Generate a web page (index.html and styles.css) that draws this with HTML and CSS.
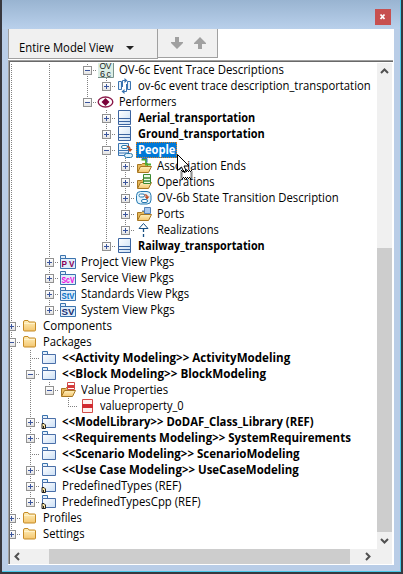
FILE: index.html
```html
<!DOCTYPE html>
<html lang="en">
<head>
<meta charset="utf-8">
<title>Entire Model View</title>
<link rel="stylesheet" href="styles.css">
</head>
<body>
<div class="window">
  <header class="titlebar"><button class="close" aria-label="Close"><svg width="16" height="16" viewBox="0 0 16 16"><path d="M5.500 5.500l4 4.500M9.500 5.500l-4 4.500" stroke="#fff" stroke-width="1.800"/></svg></button></header>
  <main class="client">
    <div class="toolbar">
      <div class="view-select"><span class="label" data-width="95">Entire Model View</span><i class="caret"></i></div>
      <div class="nav">
        <svg width="12" height="12" viewBox="0 0 12 12"><path d="M4 0h4v5h4v1L6 12 0 6V5h4z"/></svg>
        <svg width="12" height="12" viewBox="0 0 12 12"><path d="M4 12h4V7h4V6L6 0 0 6v1h4z"/></svg>
      </div>
    </div>
    <div class="pane">
      <div class="tree" id="tree"></div>
      <div class="vscroll">
        <svg width="15" height="16" viewBox="0 0 15 16"><path d="M4 10l3.500-3.500L11 10"/></svg>
        <div class="vthumb"></div>
        <svg width="15" height="17" viewBox="0 0 15 17"><path d="M4 7l3.500 3.500L11 7"/></svg>
      </div>
      <div class="hscroll">
        <svg width="39" height="15" viewBox="0 0 39 15"><path d="M9 4L5.500 7.500 9 11"/></svg>
        <div class="hthumb"></div>
        <svg width="42" height="15" viewBox="0 0 42 15"><path d="M16 4l3.500 3.500L16 11"/></svg>
      </div>
    </div>
  </main>
  <svg class="cursor" width="17" height="27" viewBox="0 0 17 27"><path d="M.5 .5v16l4-3.500 2.500 5.500 2.500-1-2.500-5.500h5z" fill="#fff" stroke="#000"/><path d="M4 16.500h11v8H4z" fill="none" stroke="#000" stroke-dasharray="1 1"/><path d="M5 17.500h9v6H5z" fill="none" stroke="#000" stroke-dasharray="1 1"/></svg>
</div>
<script src="tree.js"></script>
</body>
</html>
```
FILE: styles.css
```css
* { box-sizing: border-box; }
body { margin: 0; overflow: hidden; font: 12px/16px "Open Sans", "Noto Sans", sans-serif; color: #000; }
svg { display: block; flex: none; }
.window { position: relative; width: 403px; height: 574px; padding: 0 6px 6px; border: solid #38383e; border-width: 0 2px 2px; background: #b9cde7; box-shadow: inset -1px -1px #48c8e8; display: flex; flex-direction: column; }
.titlebar { height: 29px; margin: 0 -5px 0 -6px; padding: 9px 9px 0 0; display: flex; justify-content: flex-end; align-items: flex-start; background: linear-gradient(#99b4d1, #b9d0eb); }
.close { width: 16px; height: 16px; padding: 0; border: 0; background: #c75050; }
.client { width: 386px; height: 536px; background: #fff; }
.toolbar { height: 31px; display: flex; align-items: flex-start; }
.view-select { width: 150px; height: 30px; padding: 11px 0 0 10px; background: #f0f0f0; border: solid #a0a0a0; border-width: 0 1px 1px; display: flex; }
.view-select .label { flex: 0 0 auto; }
.caret { margin: 6px 0 0 12px; width: 8px; height: 4px; background: #222; clip-path: polygon(0 0, 100% 0, 50% 100%); }
.nav { width: 60px; height: 29px; background: #f0f0f0; border: solid #a0a0a0; border-width: 0 1px 1px 0; display: flex; padding: 8px 0 0 13px; gap: 11px; fill: #a0a0a0; }
.pane { width: 385px; height: 504px; border: solid #a0a0a0; border-width: 1px 0 0 1px; box-shadow: inset 1px 1px #696969; padding: 2px 0 0 1px; display: grid; grid-template: 486px 15px / 367px 15px; }
.tree { overflow: hidden; height: 486px; }
.row { display: flex; height: 16px; margin-left: -8px; white-space: nowrap; }
.row:first-child { margin-top: -1px; }
.cell { flex: none; width: 19px; height: 16px; padding: 4px 0 0 5px; background-repeat: no-repeat; --v: repeating-linear-gradient(#808080 0 1px, transparent 1px 2px); --h: repeating-linear-gradient(90deg, #808080 0 1px, transparent 1px 2px); }
.cell.line { background-image: var(--v); background-size: 1px 16px; background-position: 9px 0; }
.cell.mid, .cell.end { background-image: var(--v), var(--h); background-position: 9px 0, 9px 8px; background-size: 1px 16px, 10px 1px; }
.cell.end { background-size: 1px 9px, 10px 1px; }
.toggle { display: block; width: 9px; height: 9px; border: 1px solid #919191; background: linear-gradient(#3b559c, #3b559c) 1px 3px / 5px 1px no-repeat, linear-gradient(#fff, #e4e4e4); }
.toggle.plus { background: linear-gradient(#3b559c, #3b559c) 1px 3px / 5px 1px no-repeat, linear-gradient(#3b559c, #3b559c) 3px 1px / 1px 5px no-repeat, linear-gradient(#fff, #e4e4e4); }
.icon { flex: none; width: 22px; padding-left: 1px; }
.icon.inset { padding-left: 2px; }
.icon svg { overflow: visible; }
.icon text { font-family: "Liberation Sans", sans-serif; font-weight: bold; }
.icon .thin { font-weight: 400; }
.label { display: block; height: 16px; }
.label span { display: inline-block; transform-origin: 0 50%; white-space: nowrap; }
.bold { font-weight: 700; }
.selected { background: #0078d7; color: #fff; outline: 1px dotted #d88020; outline-offset: -1px; margin-left: -2px; padding: 0 2px; box-sizing: content-box; }
.vscroll { background: #f0f0f0; display: flex; flex-direction: column; }
.vthumb { margin-top: 169px; height: 284px; background: #cdcdcd; }
.hscroll { grid-column: 1 / 3; background: #f0f0f0; display: flex; }
.hthumb { width: 301px; background: #cdcdcd; }
.vscroll path, .hscroll path { fill: none; stroke: #505050; stroke-width: 2; }
.cursor { position: absolute; left: 175px; top: 154px; }
.defs { position: absolute; }
```
FILE: tree.js
```js
const pkg = `<path d="M1.500 4.500v-3h5v3" fill="#e7f1fb" stroke="#3b73ae"/><path d="M1.500 4.500h13v9h-13z" fill="url(#blue)" stroke="#4a6fa8"/>`;
const openFolder = `<path d="M1.500 14V6.500h4l1-1h5v4" fill="#e7b95c" stroke="#a87722"/><path d="M1.500 14.500l3-6h11l-3 6z" fill="url(#gold)" stroke="#a87722"/>`;
const view = (t, color) => `<path d="M.5 4.500v-3h5v3M.5 4.500h15v10H.5z" fill="#e1eefa" stroke="#3b73ae"/><text x="1.500" y="12.500" font-size="8.500" textLength="13" lengthAdjust="spacingAndGlyphs" fill="${color}">${t}</text>`;
const block = `<path d="M.5 .5h12v14H.5z" fill="url(#blue)" stroke="#3b64a0"/><path d="M1 8.500h11M1 11.500h11" stroke="#3b64a0"/>`;
const icons = {
  ov: `<path d="M0 0h15.500v15.500H0z" fill="#dceee6"/><path d="M15.500 0v15.500H0" fill="none" stroke="#78928a"/><text class="thin" x="1.500" y="7" font-size="8.500" textLength="12" fill="#222">OV</text><text class="thin" x="2" y="14.500" font-size="9" textLength="11" fill="#222">6c</text>`,
  trace: `<path d="M.5 3.500h3v8h-3zM9.500 3.500h3v8h-3z" fill="#e4f0fc" stroke="#3973b0"/><path d="M4.500 9V2.500H8M8.500 6v7.500H5" fill="none" stroke="#3973b0"/><path d="M6.500 0L9.500 2.500l-3 2.500zM6.500 11L3.500 13.500l3 2.500z" fill="#3973b0"/>`,
  eye: `<ellipse cx="7.500" cy="8" rx="7.300" ry="5" fill="#fff" stroke="#8a1848" stroke-width="1.400"/><path d="M7.500 4L11.500 8l-4 4-4-4z" fill="#790038"/>`,
  block,
  people: `<path d="M.5 1.500h10v12H.5z" fill="#eaf4fc" stroke="#3973b0"/><path d="M1 8.500h9M1 11h9" stroke="#3973b0"/><rect x="3.500" y="3.500" width="6" height="3" rx="1.500" fill="#fff" stroke="#2879ac"/><path d="M9 4.500q3-.5 3 3.500" fill="none" stroke="#b64b20" stroke-width="1.400"/><path d="M9.500 7h5L12 10z" fill="#b64b20"/><rect x="6.500" y="11.500" width="8" height="4" rx="2" fill="#dff1fc" stroke="#2879ac"/>`,
  assoc: openFolder + `<path d="M5.500 1.500H10v5h5" fill="none" stroke="#4aad32" stroke-width="1.800"/><path d="M6 .5h5v4" fill="none" stroke="#2d76b8"/>`,
  ops: openFolder + `<path d="M7.500.5h7v9h-7z" fill="#edf9e8" stroke="#3c8a32"/><path d="M8 4h6M8 7h6" stroke="#3c8a32" stroke-width="1.500"/>`,
  state: `<rect x=".5" y="1.500" width="14.500" height="12.500" rx="4" fill="#e3f4fd" stroke="#2679b1"/><rect x="3" y="4" width="5.500" height="3" rx="1.500" fill="#fff" stroke="#2679b1"/><rect x="5.500" y="9.500" width="6" height="3" rx="1.500" fill="#fff" stroke="#2679b1"/><path d="M8.500 5q3-.5 2.500 2" fill="none" stroke="#bd4c25" stroke-width="1.300"/><path d="M8.500 6.500h5L11 9.500z" fill="#bd4c25"/>`,
  ports: openFolder + `<path d="M8.500 1.500h6v6h-6z" fill="#a9c8ef" stroke="#5580b5"/><path d="M6 5h3" stroke="#5580b5"/>`,
  real: `<path d="M3 6.500L7.500 1.500l4.500 5z" fill="#fff" stroke="#174f83"/><path d="M7.500 7v9" stroke="#174f83" stroke-width="1.300" stroke-dasharray="3 2"/>`,
  pv: view('P V', '#8a0055'), scv: view('ScV', '#f000df'), stv: view('StV', '#0870c8'), sv: view('SV', '#192e72'),
  folder: `<path d="M.5 12V4q0-1.500 1.500-1.500h3L6 4h5.500q1 0 1 1v7q0 1-1 1h-10q-1 0-1-1z" fill="url(#gold)" stroke="#c58b26"/><path d="M1 5.500h11" stroke="#fff2ca"/>`,
  pkg,
  ref: pkg + `<path d="M1 9.500h2l1.500 1.500v3.500H1z" fill="#ffe9a2" stroke="#222"/><path d="M2.500 12v2" stroke="#222"/>`,
  values: openFolder + `<path d="M7.500.5h7v7h-7z" fill="#fff" stroke="#cf4949"/><path d="M8 3h6v3H8z" fill="#d43c3c"/>`,
  value: `<path d="M3.500 1.500h10v13h-10z" fill="#fff1ef" stroke="#d34e49"/><path d="M3 6h11v4H3z" fill="#d12b31"/>`
};
const insetIcons = ['trace', 'block', 'people', 'folder'];

/* Guides: "|" line through, "." empty, "+" / "-" toggles, "t" / "l" leaf joints.
   A trailing "e" ends the guide at this row. */
const rows = [
  ['|.|.-', 'ov', 'OV-6c Event Trace Descriptions', 165],
  ['|.|.|+e', 'trace', 'ov-6c event trace description_transportation', 233],
  ['|.|.-e', 'eye', 'Performers', 58],
  ['|.|..+', 'block', 'Aerial_transportation', 117, 'bold'],
  ['|.|..+', 'block', 'Ground_transportation', 127, 'bold'],
  ['|.|..-', 'people', 'People', 37, 'bold selected'],
  ['|.|..|+', 'assoc', 'Association Ends', 89],
  ['|.|..|+', 'ops', 'Operations', 58],
  ['|.|..|+', 'state', 'OV-6b State Transition Description', 182],
  ['|.|..|+', 'ports', 'Ports', 27],
  ['|.|..|+e', 'real', 'Realizations', 62],
  ['|.|..+e', 'block', 'Railway_transportation', 127, 'bold'],
  ['|.+', 'pv', 'Project View Pkgs', 93],
  ['|.+', 'scv', 'Service View Pkgs', 93],
  ['|.+', 'stv', 'Standards View Pkgs', 108],
  ['|.+e', 'sv', 'System View Pkgs', 94],
  ['+', 'folder', 'Components', 69],
  ['-', 'folder', 'Packages', 49],
  ['|t', 'pkg', '<<Activity Modeling>> ActivityModeling', 228, 'bold'],
  ['|-', 'pkg', '<<Block Modeling>> BlockModeling', 204, 'bold'],
  ['||-e', 'values', 'Value Properties', 87],
  ['||.l', 'value', 'valueproperty_0', 84],
  ['|+', 'ref', '<<ModelLibrary>> DoDAF_Class_Library (REF)', 252, 'bold'],
  ['|+', 'pkg', '<<Requirements Modeling>> SystemRequirements', 289, 'bold'],
  ['|t', 'pkg', '<<Scenario Modeling>> ScenarioModeling', 238, 'bold'],
  ['|+', 'pkg', '<<Use Case Modeling>> UseCaseModeling', 237, 'bold'],
  ['|+', 'ref', 'PredefinedTypes (REF)', 119],
  ['|+e', 'ref', 'PredefinedTypesCpp (REF)', 139],
  ['+', 'folder', 'Profiles', 39],
  ['+e', 'folder', 'Settings', 42]
];

const escapeText = s => s.replace(/</g, '&lt;').replace(/>/g, '&gt;');
const defs = `<svg class="defs" width="0" height="0"><defs><linearGradient id="gold" x2="0" y2="1"><stop stop-color="#fff0bd"/><stop offset="1" stop-color="#f4c66f"/></linearGradient><linearGradient id="blue" x2="1" y2="1"><stop stop-color="#fff"/><stop offset="1" stop-color="#cbdff5"/></linearGradient></defs></svg>`;
document.body.insertAdjacentHTML('beforeend', defs);

document.getElementById('tree').innerHTML = rows.map(([guides, icon, text, width, style = '']) => {
  const ends = guides.endsWith('e');
  const cells = [...guides.replace('e', '')].map(g => {
    if (g === '.') return '<i class="cell"></i>';
    if (g === '|') return '<i class="cell line"></i>';
    const joint = ends || g === 'l' ? 'end' : 'mid';
    const toggle = g === '+' ? '<b class="toggle plus"></b>' : g === '-' ? '<b class="toggle"></b>' : '';
    return `<i class="cell ${joint}">${toggle}</i>`;
  }).join('');
  const inset = insetIcons.includes(icon) ? ' inset' : '';
  return `<div class="row">${cells}<span class="icon${inset}"><svg width="16" height="16" viewBox="0 0 16 16">${icons[icon]}</svg></span><span class="label ${style}" data-width="${width}">${escapeText(text)}</span></div>`;
}).join('');

document.querySelectorAll('.label').forEach(label => {
  label.innerHTML = `<span>${label.innerHTML}</span>`;
  const inner = label.firstChild;
  const width = Number(label.dataset.width);
  inner.style.transform = `scaleX(${width / inner.offsetWidth})`;
  label.style.width = `${width}px`;
});
```
